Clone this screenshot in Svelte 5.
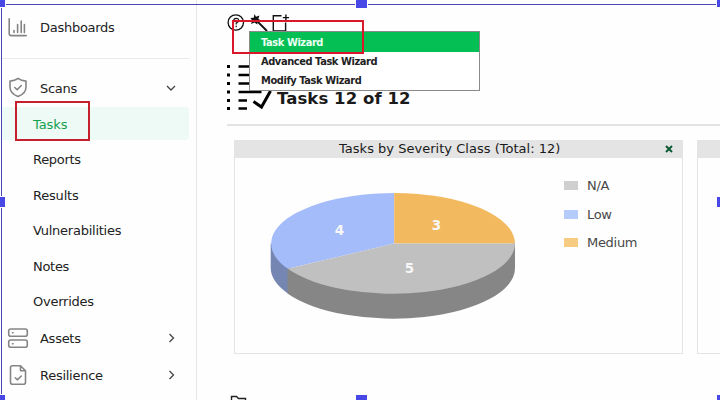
<script>
  const scanItems = [
    { label: 'Tasks', active: true, ls: -0.1 },
    { label: 'Reports', ls: -0.3 },
    { label: 'Results', ls: -0.2 },
    { label: 'Vulnerabilities', ls: -0.25 },
    { label: 'Notes', ls: -0.3 },
    { label: 'Overrides', ls: -0.25 }
  ];
  const wizards = ['Task Wizard', 'Advanced Task Wizard', 'Modify Task Wizard'];
  const legend = [
    { label: 'N/A', color: '#cfcfcf' },
    { label: 'Low', color: '#b5cbfb' },
    { label: 'Medium', color: '#f6cb82' }
  ];
  const handles = [
    [-6, -3], [356, -2], [717, -3],
    [-6, 197], [717, 197],
    [-6, 395], [356, 395], [717, 395]
  ];
</script>

<div class="screen">
  <nav class="sidebar">
    <div class="row dash">
      <svg class="ico" width="24" height="24" viewBox="0 0 24 24"><path d="M3.200 2.800v14.600q0 2.200 2.200 2.200h14.800M8 14.500v2M11.600 8.500v8M15.200 5v11.500M18.400 8.500v8" /></svg>
      <span class="name">Dashboards</span>
    </div>
    <div class="divider"></div>
    <div class="row scans">
      <svg class="ico" width="24" height="24" viewBox="0 0 24 24"><path d="M12 2.300c-2.300 1.800-5 2.600-8 2.800v6.200c0 4.600 3.400 7.500 8 9.300 4.600-1.800 8-4.700 8-9.300V5.100c-3-.2-5.700-1-8-2.800zM8.800 11.500l2.300 2.300 4.200-4.300" /></svg>
      <span class="name">Scans</span>
      <svg class="chev" width="12" height="12" viewBox="0 0 12 12"><path d="M2 4l4 4 4-4" /></svg>
    </div>
    <div class="subs">
      {#each scanItems as item}
        <div class="sub" class:active={item.active}>
          <span style="letter-spacing: {item.ls}px">{item.label}</span>
        </div>
      {/each}
    </div>
    <div class="row group">
      <svg class="ico" width="24" height="24" viewBox="0 0 24 24"><rect x="2.700" y="3" width="18.600" height="7.300" rx="2" /><rect x="2.700" y="14" width="18.600" height="7.300" rx="2" /><path d="M6.500 6.700h.6M6.500 17.700h.6" /></svg>
      <span class="name">Assets</span>
      <svg class="chev" width="12" height="12" viewBox="0 0 12 12"><path d="M4.500 2l4 4-4 4" /></svg>
    </div>
    <div class="row group">
      <svg class="ico" width="24" height="24" viewBox="0 0 24 24"><path d="M14.500 2.800H6.500q-2 0-2 2v14.400q0 2 2 2h11q2 0 2-2V7.800zM14.500 2.800v5h5M9.300 14.800l2 2 4-3.800" /></svg>
      <span class="name">Resilience</span>
      <svg class="chev" width="12" height="12" viewBox="0 0 12 12"><path d="M4.500 2l4 4-4 4" /></svg>
    </div>
  </nav>

  <main>
    <div class="toolbar">
      <svg width="64" height="22" viewBox="0 0 64 22" fill="none" stroke="#111">
        <circle cx="8.800" cy="10.500" r="7.700" stroke-width="1.300" />
        <path d="M6.700 8.800q0-2.500 2.500-2.500t2.400 2.200q0 1.400-2.400 2.600v1.400M9.200 13.700v1.500" stroke-width="1.200" />
        <path d="M27.500 2l1.500 2.700 3.500-1.200-1.200 3.200 2.400 1.800-3.200.9-.2 3-2.800-2-3.500 1.600 1.300-3.500-2-2.500 3.400-.2z" fill="#111" stroke="none" />
        <path d="M30 9l10 10" stroke-width="1.800" />
        <path d="M54.500 3.700H46.300V19h12.300V10.500M55.800 5.600h6.200M58.900 2.500v6.200" stroke-width="1.400" />
      </svg>
    </div>
    <header class="title">
      <svg width="48" height="48" viewBox="0 0 48 48">
        <path d="M0 3.500h3M0 12h3M0 20.500h3M0 29h3M0 37.500h3M0 45.500h3" stroke="#000" stroke-width="2.800" />
        <path d="M11.500 3.500h22M11.500 12h22M11.500 20.500h22M11.500 29h23M11.500 37.500h8.500M11.500 45.500h8.500" stroke="#000" stroke-width="2.600" />
        <path d="M26.500 38.500l8 5.500L43.500 28" fill="none" stroke="#000" stroke-width="3" />
      </svg>
      <h1>Tasks 12 of 12</h1>
    </header>
    <div class="cards">
      <section class="card">
        <div class="cardhead"><span class="ct">Tasks by Severity Class (Total: 12)</span>
          <svg class="close" width="8" height="8" viewBox="0 0 8 8"><path d="M1 1l6 6M7 1L1 7" stroke="#0c5a35" stroke-width="2" /></svg>
        </div>
        <div class="chart">
          <svg class="pie" width="246" height="128" viewBox="270 192 246 128">
            <path d="M270.700 243.500v25A123 50.500 0 0 0 288 293.500V250z" fill="#7686b2" />
            <path d="M287.500 268.500v25A122 50.500 0 0 0 515 268.500v-25z" fill="#868686" />
            <path d="M394.200 243.500V193A123.500 50.500 0 0 0 287.800 268.800z" fill="#a5bcfb" />
            <path d="M394.200 243.500V193A121 50.500 0 0 1 515 243.500z" fill="#f3b95f" />
            <path d="M394.200 243.500L287.800 268.800A122 50.500 0 0 0 515 243.500z" fill="#c0c0c0" />
            <g class="val"><text x="339.500" y="235">4</text><text x="436.500" y="230">3</text><text x="409.500" y="273">5</text></g>
          </svg>
          <ul class="legend">
            {#each legend as entry}
              <li><i style="background: {entry.color}"></i>{entry.label}</li>
            {/each}
          </ul>
        </div>
      </section>
      <section class="card next"><div class="cardhead"></div></section>
    </div>
    <svg class="folder" width="18" height="16" viewBox="0 0 18 16"><path d="M1.500 14V1.500h5l2 2h7V14" fill="none" stroke="#222" stroke-width="1.400" /></svg>
  </main>

  <div class="menu">
    {#each wizards as label, i}
      <div class="option" class:selected={i === 0}>{label}</div>
    {/each}
  </div>
  <div class="mark nav-mark"></div>
  <div class="mark menu-mark"></div>
  <div class="frame-top"></div>
  <div class="frame-left"></div>
  {#each handles as [x, y]}
    <div class="handle" style="left: {x}px; top: {y}px"></div>
  {/each}
</div>

<style>
  .screen {
    position: relative;
    display: flex;
    width: 720px;
    height: 400px;
    overflow: hidden;
    background: #fefefe;
    color: #222;
    font-family: "DejaVu Sans", Verdana, sans-serif;
    font-size: 13px;
  }
  .sidebar {
    box-sizing: border-box;
    flex: none;
    width: 197px;
    padding: 9px 7px 0 2px;
    border-right: 1px solid #e6e6e6;
  }
  .row {
    display: flex;
    align-items: center;
    height: 37px;
    padding: 0 12px 0 4px;
  }
  .name { flex: 1; margin-left: 10px; letter-spacing: -0.27px; }
  .ico { fill: none; stroke: #858585; stroke-width: 1.6; stroke-linecap: round; stroke-linejoin: round; }
  .chev { fill: none; stroke: #444; stroke-width: 1.3; }
  .divider { height: 1px; margin: 12px 0 11px; background: #e9e9e9; }
  .scans { height: 36px; }
  .sub { display: flex; align-items: center; height: 35.500px; padding-left: 31px; }
  .sub.active { height: 33px; margin: 1px 0 1.500px; border-radius: 0 4px 4px 0; background: #edfaf5; color: #14a04d; }
  .sub span { padding-top: 1px; }
  .group { height: 37.500px; }
  .group .name { padding-top: 1px; }
  main { flex: 1; min-width: 0; padding: 12px 0 0 30px; }
  .toolbar { height: 22px; }
  .toolbar svg, .title svg { display: block; flex: none; }
  .title { display: flex; height: 61px; padding-top: 29px; border-bottom: 2px solid #e3e3e3; }
  h1 { margin: 25px 0 0 2px; font-size: 16.500px; line-height: 22px; letter-spacing: 0.08px; color: #1a1a1a; white-space: nowrap; }
  .cards { display: flex; gap: 14px; margin: 14px 0 0 7px; }
  .card { box-sizing: border-box; flex: none; width: 449px; height: 214px; border: 1px solid #e4e4e4; border-top: 0; }
  .next { width: 100px; }
  .cardhead { display: flex; align-items: center; height: 18px; background: #e4e4e4; }
  .ct { flex: 1; padding-left: 104px; font-size: 13px; line-height: 18px; letter-spacing: 0.02px; white-space: nowrap; color: #1a1a1a; }
  .close { margin-right: 9px; }
  .chart { display: flex; padding: 34px 0 0 35px; }
  .pie { flex: none; }
  .val { fill: #f7f7f7; font-size: 13.500px; font-weight: bold; text-anchor: middle; }
  .legend { list-style: none; margin: -21px 0 0 48px; padding: 0; color: #484848; }
  .legend li { display: flex; align-items: center; height: 28.700px; letter-spacing: -0.3px; }
  .legend i { width: 14px; height: 9px; margin-right: 9px; }
  .folder { display: block; margin: 41px 0 0 3px; }
  .menu { position: absolute; left: 249px; top: 31px; box-sizing: border-box; width: 231px; height: 60px; border: 1px solid #8a8a8a; background: #fff; }
  .option { height: 18.500px; padding-left: 11px; font-size: 9.900px; font-weight: bold; line-height: 20px; letter-spacing: -0.42px; color: #222; }
  .selected { height: 20px; line-height: 21px; background: #04c054; color: #e9fff2; }
  .mark { position: absolute; box-sizing: border-box; border: 2px solid #c6202e; }
  .nav-mark { left: 15px; top: 101px; width: 75px; height: 40px; }
  .menu-mark { left: 232px; top: 20px; width: 132px; height: 34px; border-color: #d9182a; }
  .frame-top { position: absolute; left: 0; top: 4px; width: 720px; height: 1px; background: #4646b4; }
  .frame-left { position: absolute; left: 1px; top: 0; width: 1px; height: 400px; background: #4646b4; }
  .handle { position: absolute; width: 11px; height: 10px; background: #4848e6; outline: 1px solid #fefefe; }
</style>
